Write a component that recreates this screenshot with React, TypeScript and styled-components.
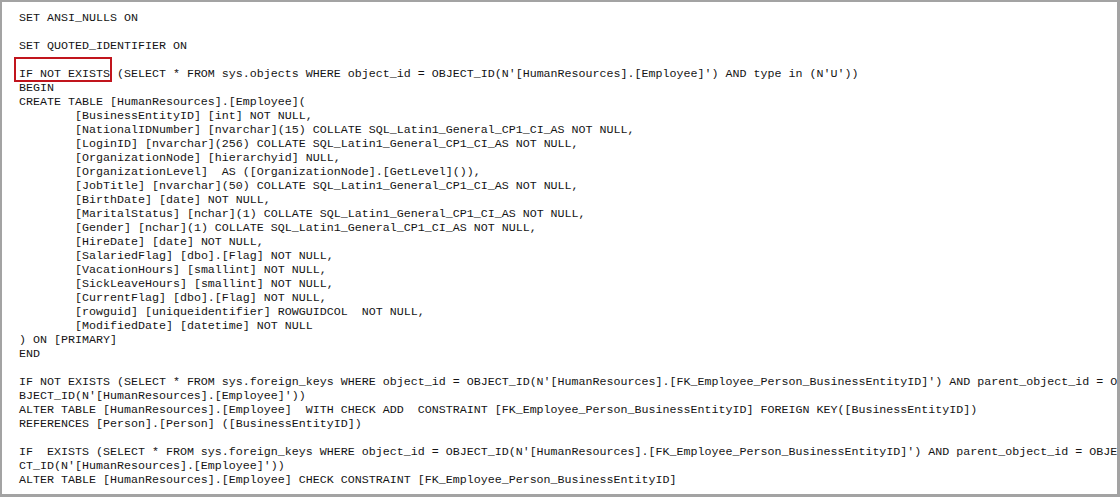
import React from "react";
import styled, { createGlobalStyle } from "styled-components";

const Global = createGlobalStyle`
  html, body { margin: 0; padding: 0; background: #ffffff; }
  #root { width: 1120px; height: 497px; }
`;

const Frame = styled.div`
  box-sizing: border-box;
  width: 1120px;
  height: 497px;
  background: #ffffff;
  border-style: solid;
  border-color: #a3a3a3;
  border-width: 2px 3px 3px 2px;
  padding: 9px 0 0 17px;
  overflow: hidden;
`;

const Code = styled.div`
  font-family: "Liberation Mono", "DejaVu Sans Mono", monospace;
  font-size: 11.665px;
  line-height: 14px;
  color: #141414;
  tab-size: 8;
  -moz-tab-size: 8;
`;

const Line = styled.div`
  height: 14px;
  white-space: pre;
`;

const Marked = styled.span`
  position: relative;
  &::after {
    content: "";
    position: absolute;
    left: -5px;
    right: -2px;
    top: -10px;
    bottom: -1px;
    border: 2px solid #c1151d;
    pointer-events: none;
  }
`;

const T = "\t";

const lines: string[] = [
  "SET ANSI_NULLS ON",
  "",
  "SET QUOTED_IDENTIFIER ON",
  "",
  "__MARK__",
  "BEGIN",
  "CREATE TABLE [HumanResources].[Employee](",
  T + "[BusinessEntityID] [int] NOT NULL,",
  T + "[NationalIDNumber] [nvarchar](15) COLLATE SQL_Latin1_General_CP1_CI_AS NOT NULL,",
  T + "[LoginID] [nvarchar](256) COLLATE SQL_Latin1_General_CP1_CI_AS NOT NULL,",
  T + "[OrganizationNode] [hierarchyid] NULL,",
  T + "[OrganizationLevel]  AS ([OrganizationNode].[GetLevel]()),",
  T + "[JobTitle] [nvarchar](50) COLLATE SQL_Latin1_General_CP1_CI_AS NOT NULL,",
  T + "[BirthDate] [date] NOT NULL,",
  T + "[MaritalStatus] [nchar](1) COLLATE SQL_Latin1_General_CP1_CI_AS NOT NULL,",
  T + "[Gender] [nchar](1) COLLATE SQL_Latin1_General_CP1_CI_AS NOT NULL,",
  T + "[HireDate] [date] NOT NULL,",
  T + "[SalariedFlag] [dbo].[Flag] NOT NULL,",
  T + "[VacationHours] [smallint] NOT NULL,",
  T + "[SickLeaveHours] [smallint] NOT NULL,",
  T + "[CurrentFlag] [dbo].[Flag] NOT NULL,",
  T + "[rowguid] [uniqueidentifier] ROWGUIDCOL  NOT NULL,",
  T + "[ModifiedDate] [datetime] NOT NULL",
  ") ON [PRIMARY]",
  "END",
  "",
  "IF NOT EXISTS (SELECT * FROM sys.foreign_keys WHERE object_id = OBJECT_ID(N'[HumanResources].[FK_Employee_Person_BusinessEntityID]') AND parent_object_id = O",
  "BJECT_ID(N'[HumanResources].[Employee]'))",
  "ALTER TABLE [HumanResources].[Employee]  WITH CHECK ADD  CONSTRAINT [FK_Employee_Person_BusinessEntityID] FOREIGN KEY([BusinessEntityID])",
  "REFERENCES [Person].[Person] ([BusinessEntityID])",
  "",
  "IF  EXISTS (SELECT * FROM sys.foreign_keys WHERE object_id = OBJECT_ID(N'[HumanResources].[FK_Employee_Person_BusinessEntityID]') AND parent_object_id = OBJE",
  "CT_ID(N'[HumanResources].[Employee]'))",
  "ALTER TABLE [HumanResources].[Employee] CHECK CONSTRAINT [FK_Employee_Person_BusinessEntityID]",
];

export default function App() {
  return (
    <>
      <Global />
      <Frame>
        <Code>
          {lines.map((l, i) =>
            l === "__MARK__" ? (
              <Line key={i}>
                <Marked>IF NOT EXISTS</Marked>
                {" (SELECT * FROM sys.objects WHERE object_id = OBJECT_ID(N'[HumanResources].[Employee]') AND type in (N'U'))"}
              </Line>
            ) : (
              <Line key={i}>{l}</Line>
            )
          )}
        </Code>
      </Frame>
    </>
  );
}
